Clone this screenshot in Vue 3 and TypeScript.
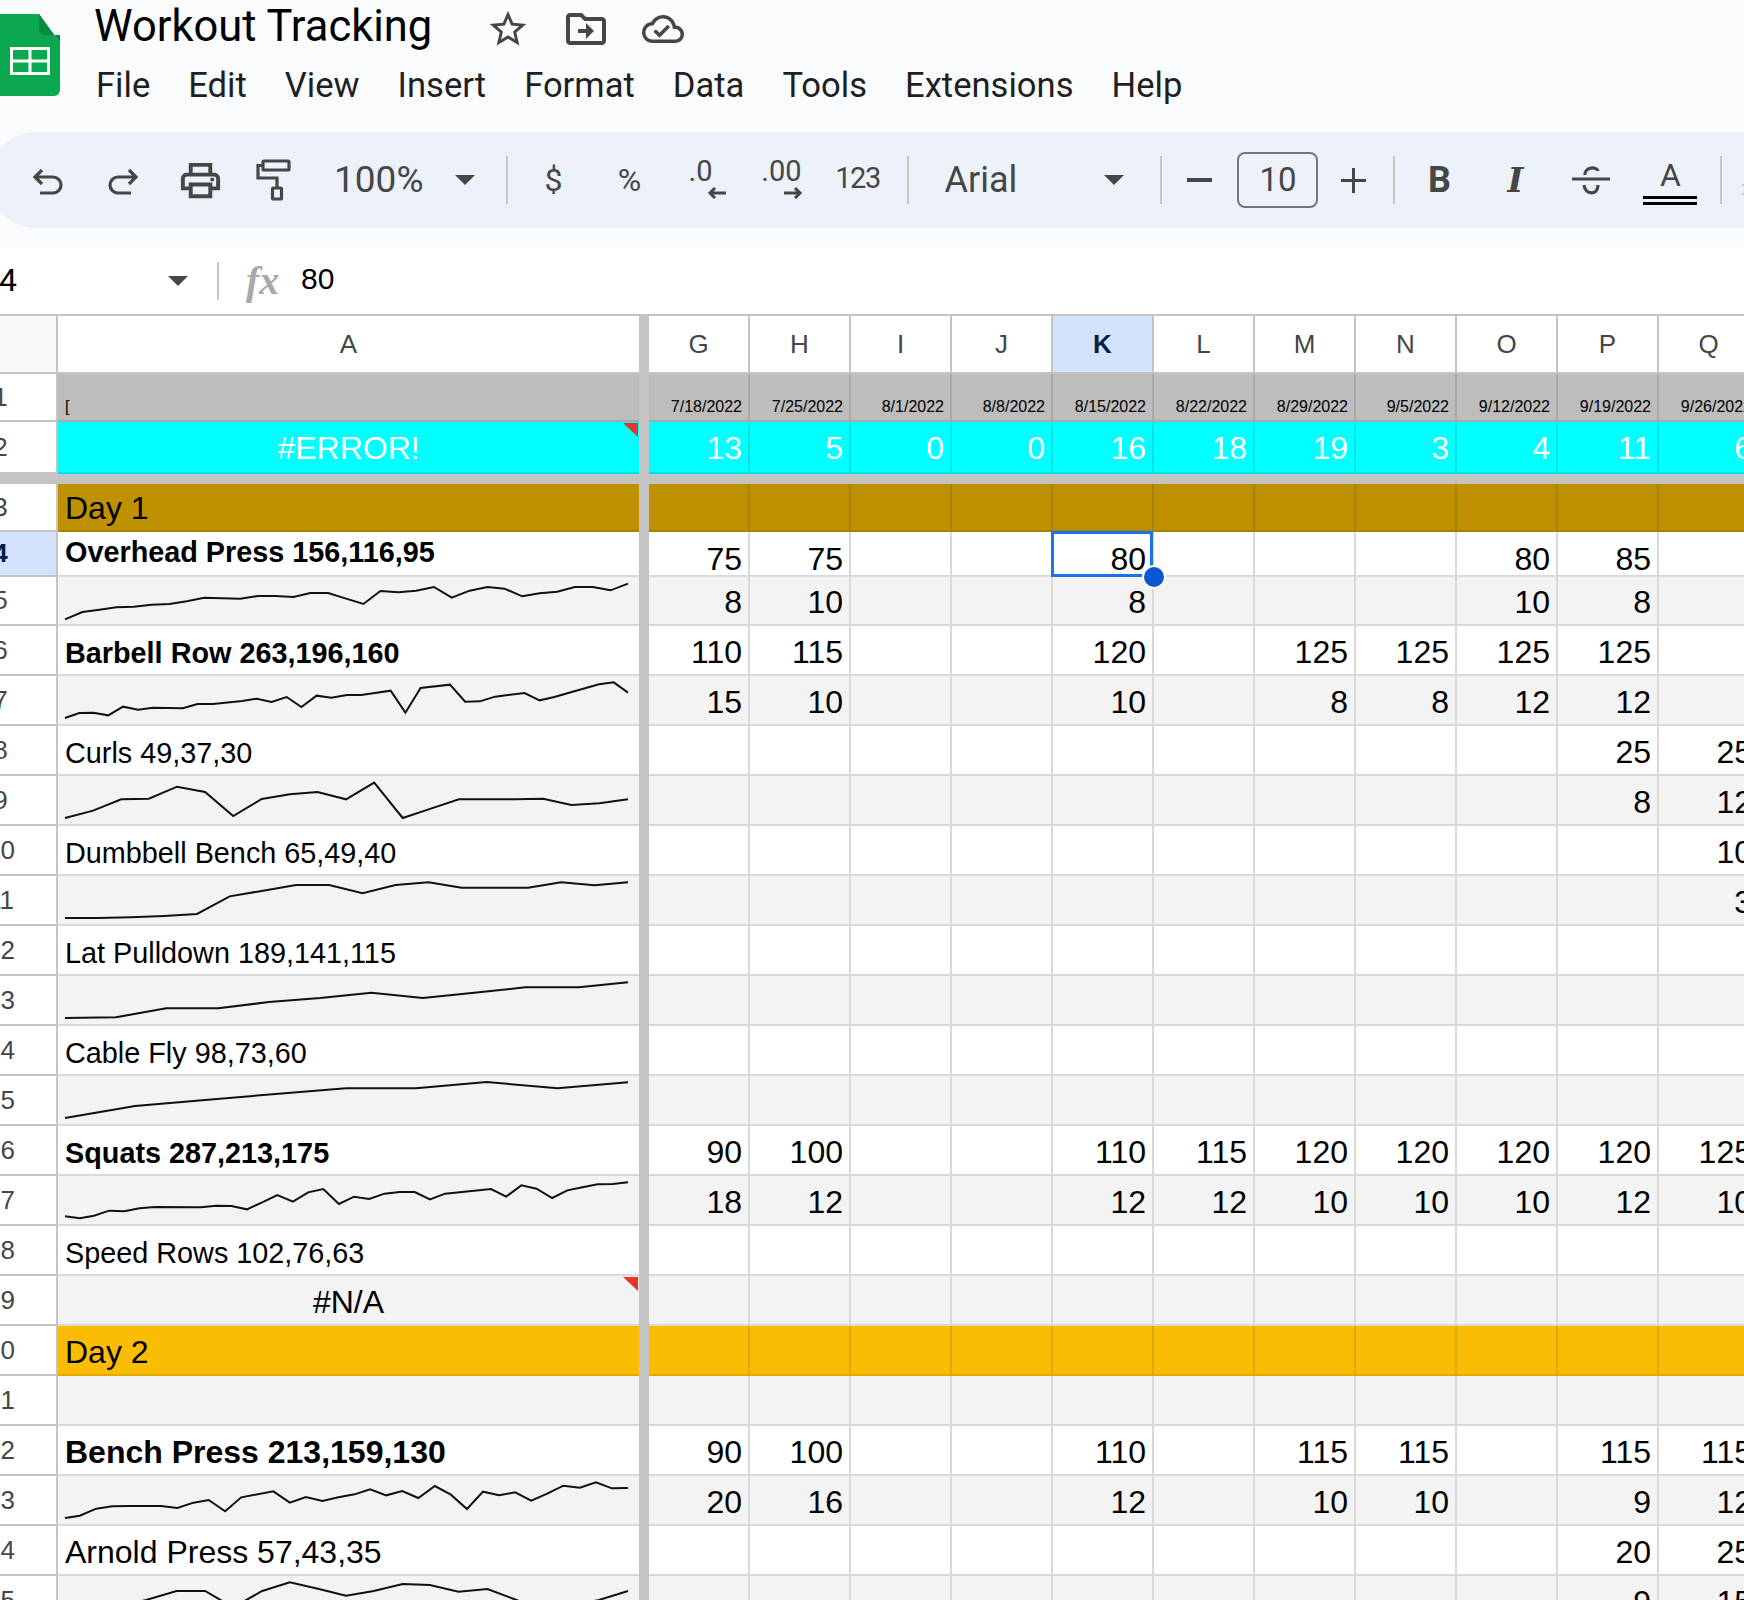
<template>
  <div class="page">
    <header class="chrome">
      <div class="topbar">
        <svg class="logo" viewBox="0 0 60 82" width="60" height="82">
          <path d="M-6 0H39L60 29V76a6 6 0 0 1-6 6H-6Z" fill="#0ca84f" />
          <path d="M39 0L60 29V21H45a6 6 0 0 1-6-6Z" fill="#0a8a3f" />
          <path d="M10 33H50V61H10ZM13 36V45.5H28.5V36ZM31.500 36V45.5H47V36ZM13 48.500V58H28.500V48.500ZM31.500 48.500V58H47V48.500Z" fill="#fff" fill-rule="evenodd" />
        </svg>
        <div class="titles">
          <div class="title-row">
            <span class="doc-title">Workout Tracking</span>
            <svg class="star" viewBox="0 0 24 24" width="44" height="44"><path d="M22 9.240l-7.190-.620L12 2 9.190 8.630 2 9.240l5.460 4.730L5.820 21 12 17.270 18.180 21l-1.630-7.030L22 9.240zM12 15.400l-3.760 2.270 1-4.280-3.320-2.880 4.380-.380L12 6.100l1.710 4.040 4.380.380-3.320 2.880 1 4.280L12 15.400z" /></svg>
            <svg class="move" viewBox="0 0 24 24" width="48" height="48"><path d="M20 6h-8l-2-2H4c-1.100 0-2 .9-2 2v12c0 1.100.9 2 2 2h16c1.100 0 2-.9 2-2V8c0-1.100-.9-2-2-2zm0 12H4V6h5.170l2 2H20v10zm-8-4H8v-2h4V9l4 4-4 4v-3z" /></svg>
            <svg class="cloud" viewBox="0 0 24 24" width="42" height="42"><path d="M19.350 10.040C18.670 6.590 15.640 4 12 4 9.110 4 6.600 5.640 5.350 8.040 2.340 8.360 0 10.910 0 14c0 3.310 2.690 6 6 6h13c2.760 0 5-2.240 5-5 0-2.640-2.050-4.780-4.650-4.960zM19 18H6c-2.210 0-4-1.790-4-4 0-2.050 1.530-3.760 3.560-3.970l1.070-.110.5-.950C8.080 7.140 9.940 6 12 6c2.620 0 4.880 1.860 5.390 4.430l.3 1.500 1.530.110c1.560.1 2.780 1.410 2.780 2.960 0 1.650-1.350 3-3 3zm-9-3.820l-2.090-2.090L6.500 13.500 10 17l6.010-6.010-1.410-1.410z" /></svg>
          </div>
          <nav class="menu">
            <span v-for="m in menus" :key="m">{{ m }}</span>
          </nav>
        </div>
      </div>

      <div class="toolbar">
        <div class="group g-first">
          <div class="tool">
            <svg viewBox="0 0 40 40" width="40" height="40" class="line"><path d="M14 10L7 17L14 24M7 17H25a8 8 0 0 1 0 16H12" /></svg>
          </div>
          <div class="tool">
            <svg viewBox="0 0 40 40" width="40" height="40" class="line"><path d="M26 10L33 17L26 24M33 17H15a8 8 0 0 0 0 16H28" /></svg>
          </div>
          <div class="tool t-print">
            <svg viewBox="0 0 24 24" width="47" height="47" class="solid"><path d="M19 8h-1V3H6v5H5c-1.660 0-3 1.340-3 3v6h4v4h12v-4h4v-6c0-1.660-1.340-3-3-3zM8 5h8v3H8V5zm8 12v2H8v-4h8v2zm2-2v-2H6v2H4v-4c0-.55.45-1 1-1h14c.55 0 1 .45 1 1v4h-2z" /><circle cx="18" cy="11.500" r="1" /></svg>
          </div>
          <div class="tool t-paint">
            <svg viewBox="0 0 40 42" width="40" height="42" class="line"><rect x="11" y="2" width="26" height="9" rx="1" /><path d="M11 6.500H6V19H25V29" /><rect x="20.500" y="29" width="9" height="11" rx="1" /></svg>
          </div>
        </div>
        <span class="tb-text zoom">100%</span>
        <span class="caret c-zoom"></span>
        <span class="sep s1"></span>

        <div class="group g-num">
          <div class="tool glyph">$</div>
          <div class="tool glyph">%</div>
          <div class="tool dec">
            <span class="dec-text dec-one">.0</span>
            <svg viewBox="0 0 20 12" width="20" height="12" class="arrow"><path d="M19 6H3M8 1L3 6L8 11" /></svg>
          </div>
          <div class="tool dec">
            <span class="dec-text">.00</span>
            <svg viewBox="0 0 20 12" width="20" height="12" class="arrow"><path d="M1 6H17M12 1L17 6L12 11" /></svg>
          </div>
          <div class="tool glyph small">123</div>
        </div>
        <span class="sep s2"></span>
        <span class="tb-text font">Arial</span>
        <span class="caret c-font"></span>
        <span class="sep s3"></span>
        <span class="minus"></span>
        <span class="size">10</span>
        <span class="plus"></span>
        <span class="sep s4"></span>

        <div class="group g-format">
          <div class="tool bold">B</div>
          <div class="tool italic">I</div>
          <div class="tool">
            <svg viewBox="0 0 40 40" width="40" height="40" class="line"><path d="M1 19H39" /><path d="M14 15C13 7 26 6 27 11" /><path d="M13 25C14 35 27 36 27 25" /></svg>
          </div>
          <div class="tool color">
            <span class="color-a">A</span>
            <span class="color-bars"></span>
          </div>
        </div>
        <span class="sep s5"></span>
        <span class="more"></span>
      </div>
    </header>

    <div class="formula">
      <span class="name-box">K4</span>
      <span class="caret c-name"></span>
      <span class="sep s-name"></span>
      <span class="fx">fx</span>
      <span class="formula-value">80</span>
    </div>

    <div class="sheet">
      <div class="row row-head">
        <div class="rh corner"></div>
        <div class="a col-a">A</div>
        <div class="band"></div>
        <div v-for="c in cols" :key="c" class="cell col-name" :class="{ active: c === 'K' }">{{ c }}</div>
      </div>

      <template v-for="r in rows" :key="r.n">
        <div class="row" :class="r.cls">
          <div class="rh" :class="{ active: r.n === 4 }">{{ r.n }}</div>
          <div class="a" :class="r.labelCls">
            <svg v-if="r.spark" class="spark" viewBox="0 0 1262 144" width="563" height="48" preserveAspectRatio="none">
              <polyline :points="sparkPoints(r.spark)" />
            </svg>
            <span v-else>{{ r.label }}</span>
            <i v-if="r.err" class="err"></i>
          </div>
          <div class="band"></div>
          <div v-for="(v, i) in r.values" :key="i" class="cell">
            <span>{{ v }}</span>
            <template v-if="r.n === 4 && cols[i] === 'K'">
              <i class="select"></i>
              <i class="handle"></i>
            </template>
          </div>
        </div>
        <div v-if="r.n === 2" class="freeze"></div>
      </template>
    </div>
  </div>
</template>

<script setup lang="ts">
interface Spark {
  top: number
  pts: number[]
}

interface Row {
  n: number
  cls: string
  labelCls?: string
  label?: string
  values: string[]
  spark?: Spark
  err?: boolean
}

const menus = ['File', 'Edit', 'View', 'Insert', 'Format', 'Data', 'Tools', 'Extensions', 'Help']
const cols = ['G', 'H', 'I', 'J', 'K', 'L', 'M', 'N', 'O', 'P', 'Q']

// G..Q, blank cells as ''
const vals = (s: string) => s.split(',')
const blank = vals(',,,,,,,,,,')

function sparkPoints(s: Spark) {
  const out: string[] = []
  for (let i = 0; i < s.pts.length; i += 2) {
    out.push(`${s.pts[i] - 148},${s.pts[i + 1] - s.top}`)
  }
  return out.join(' ')
}

const rows: Row[] = [
  { n: 1, cls: 'r-date', labelCls: 'tiny', label: '[', values: vals('7/18/2022,7/25/2022,8/1/2022,8/8/2022,8/15/2022,8/22/2022,8/29/2022,9/5/2022,9/12/2022,9/19/2022,9/26/2022') },
  { n: 2, cls: 'r-total', labelCls: 'center', label: '#ERROR!', err: true, values: vals('13,5,0,0,16,18,19,3,4,11,6') },
  { n: 3, cls: 'r-day1', labelCls: 'big', label: 'Day 1', values: blank },
  { n: 4, cls: 'r-top', labelCls: 'small b', label: 'Overhead Press 156,116,95', values: vals('75,75,,,80,,,,80,85,') },
  { n: 5, cls: 'alt r49', values: vals('8,10,,,8,,,,10,8,'), spark: { top: 828, pts: [148, 955, 187, 933, 225, 926, 263, 919, 302, 917, 342, 911, 382, 909, 421, 901, 460, 890, 500, 892, 541, 893, 581, 885, 620, 885, 660, 888, 698, 876, 738, 876, 778, 893, 817, 909, 855, 870, 895, 874, 935, 869, 975, 858, 1015, 890, 1055, 869, 1095, 858, 1133, 863, 1173, 886, 1212, 877, 1251, 872, 1291, 858, 1331, 858, 1371, 868, 1410, 848] } },
  { n: 6, cls: '', labelCls: 'small b', label: 'Barbell Row 263,196,160', values: vals('110,115,,,120,,125,125,125,125,') },
  { n: 7, cls: 'alt', values: vals('15,10,,,10,,8,8,12,12,'), spark: { top: 1128, pts: [148, 1254, 180, 1239, 212, 1238, 245, 1246, 278, 1220, 312, 1229, 345, 1223, 412, 1225, 445, 1212, 480, 1212, 545, 1203, 578, 1196, 611, 1206, 645, 1191, 678, 1221, 712, 1187, 745, 1193, 780, 1185, 812, 1185, 878, 1172, 911, 1238, 945, 1164, 1011, 1154, 1045, 1205, 1078, 1204, 1112, 1190, 1178, 1179, 1212, 1201, 1245, 1191, 1278, 1178, 1345, 1153, 1378, 1147, 1410, 1178] } },
  { n: 8, cls: '', labelCls: 'small', label: 'Curls 49,37,30', values: vals(',,,,,,,,,25,25') },
  { n: 9, cls: 'alt', values: vals(',,,,,,,,,8,12'), spark: { top: 168, pts: [148, 294, 211, 272, 274, 238, 336, 236, 399, 200, 462, 216, 525, 288, 589, 237, 652, 223, 714, 216, 778, 238, 841, 188, 905, 294, 968, 266, 1031, 238, 1157, 238, 1220, 236, 1283, 255, 1346, 250, 1410, 238] } },
  { n: 10, cls: '', labelCls: 'small', label: 'Dumbbell Bench 65,49,40', values: vals(',,,,,,,,,,10') },
  { n: 11, cls: 'alt', values: vals(',,,,,,,,,,3'), spark: { top: 468, pts: [148, 594, 222, 594, 296, 592, 370, 588, 444, 582, 517, 529, 592, 512, 666, 495, 740, 495, 815, 520, 889, 495, 963, 487, 1037, 503, 1186, 503, 1260, 487, 1335, 496, 1410, 487] } },
  { n: 12, cls: '', labelCls: 'small', label: 'Lat Pulldown 189,141,115', values: blank },
  { n: 13, cls: 'alt', values: blank, spark: { top: 768, pts: [148, 894, 262, 892, 375, 865, 492, 865, 605, 846, 720, 834, 835, 818, 950, 834, 1065, 818, 1180, 802, 1300, 802, 1410, 787] } },
  { n: 14, cls: '', labelCls: 'small', label: 'Cable Fly 98,73,60', values: blank },
  { n: 15, cls: 'alt', values: blank, spark: { top: 1068, pts: [148, 1194, 305, 1158, 462, 1140, 620, 1122, 778, 1105, 935, 1105, 1093, 1086, 1252, 1105, 1410, 1087] } },
  { n: 16, cls: '', labelCls: 'small b', label: 'Squats 287,213,175', values: vals('90,100,,,110,115,120,120,120,120,125') },
  { n: 17, cls: 'alt', values: vals('18,12,,,12,12,10,10,10,12,10'), spark: { top: 78, pts: [148, 199, 181, 205, 213, 197, 247, 182, 281, 184, 315, 175, 350, 171, 452, 172, 487, 167, 521, 168, 556, 178, 590, 157, 624, 135, 659, 155, 693, 127, 727, 117, 762, 162, 796, 140, 830, 147, 864, 131, 898, 126, 932, 126, 966, 148, 1000, 131, 1103, 117, 1137, 140, 1171, 106, 1205, 116, 1240, 144, 1274, 121, 1308, 112, 1342, 103, 1376, 102, 1410, 97] } },
  { n: 18, cls: '', labelCls: 'small', label: 'Speed Rows 102,76,63', values: blank },
  { n: 19, cls: 'alt', labelCls: 'center dark', label: '#N/A', err: true, values: blank },
  { n: 20, cls: 'r-day2', labelCls: 'big', label: 'Day 2', values: blank },
  { n: 21, cls: 'alt', label: '', values: blank },
  { n: 22, cls: '', labelCls: 'big b', label: 'Bench Press 213,159,130', values: vals('90,100,,,110,,115,115,,115,115') },
  { n: 23, cls: 'alt', values: vals('20,16,,,12,,10,10,,9,12'), spark: { top: 978, pts: [148, 1104, 181, 1097, 218, 1076, 254, 1069, 291, 1068, 363, 1068, 400, 1074, 436, 1058, 470, 1050, 507, 1084, 543, 1042, 615, 1024, 652, 1058, 688, 1041, 725, 1053, 761, 1042, 797, 1033, 832, 1018, 868, 1036, 904, 1023, 940, 1044, 977, 1008, 1013, 1034, 1049, 1077, 1085, 1025, 1121, 1036, 1157, 1027, 1193, 1052, 1229, 1031, 1265, 1007, 1302, 1013, 1338, 997, 1374, 1015, 1410, 1014] } },
  { n: 24, cls: '', labelCls: 'big', label: 'Arnold Press 57,43,35', values: vals(',,,,,,,,,20,25') },
  { n: 25, cls: 'alt', values: vals(',,,,,,,,,9,15'), spark: { top: 1278, pts: [148, 1400, 265, 1370, 330, 1350, 398, 1323, 462, 1323, 525, 1372, 590, 1323, 652, 1297, 715, 1316, 778, 1337, 840, 1323, 905, 1302, 966, 1305, 1030, 1325, 1095, 1317, 1160, 1350, 1220, 1385, 1345, 1350, 1410, 1323] } },
]
</script>

<style>
html,
body {
  margin: 0;
  background: #fff;
}
</style>

<style scoped>
.page {
  width: 1744px;
  height: 1600px;
  overflow: hidden;
  position: relative;
  background: #fff;
  font-family: 'Liberation Sans', Arial, sans-serif;
  color: #000;
}

.chrome {
  background: #f9fbfd;
  height: 247px;
  font-family: Roboto, 'Liberation Sans', sans-serif;
}
.topbar {
  display: flex;
  height: 132px;
}
.logo {
  margin-top: 14px;
  flex-shrink: 0;
}
.titles {
  margin-left: 35px;
}
.title-row {
  display: flex;
  align-items: center;
  height: 54px;
}
.doc-title {
  font-size: 43.500px;
  line-height: 54px;
  width: 377px;
  margin-left: -1px;
  white-space: nowrap;
  color: #000;
}
.title-row svg {
  fill: #444746;
  flex-shrink: 0;
  margin-top: 4px;
}
.star {
  margin-left: 15px;
}
.move {
  margin-left: 32px;
}
.cloud {
  margin-left: 32px;
}
.menu {
  display: flex;
  gap: 38px;
  margin-top: 3px;
  font-size: 34.600px;
  line-height: 56px;
  color: #1f1f1f;
  margin-left: 1px;
}

.toolbar {
  display: flex;
  align-items: center;
  height: 96px;
  margin-left: -12px;
  padding-left: 40px;
  background: #edf2fa;
  border-radius: 48px 0 0 48px;
  color: #444746;
}
.group {
  display: flex;
  align-items: center;
  gap: 36px;
}
.g-first {
  gap: 35px;
}
.tool {
  width: 40px;
  height: 48px;
  display: flex;
  align-items: center;
  justify-content: center;
  flex-shrink: 0;
  white-space: nowrap;
}
.t-print {
  margin-left: 2px;
}
.t-paint {
  margin-left: -3px;
}
.tool svg {
  flex-shrink: 0;
}
.line {
  fill: none;
  stroke: #444746;
  stroke-width: 3.2;
}
.solid {
  fill: #444746;
}
.tb-text {
  font-size: 36px;
  line-height: 48px;
  white-space: nowrap;
}
.zoom {
  width: 91px;
  margin-left: 42px;
  font-size: 37px;
}
.font {
  width: 71px;
  margin-left: 35px;
}
.caret {
  width: 0;
  height: 0;
  border-left: 10px solid transparent;
  border-right: 10px solid transparent;
  border-top: 10px solid #444746;
  flex-shrink: 0;
}
.c-zoom {
  margin-left: 32px;
}
.c-font {
  margin-left: 89px;
}
.sep {
  width: 2px;
  height: 48px;
  background: #c7c7c7;
  flex-shrink: 0;
}
.s1 {
  margin-left: 31px;
}
.g-num {
  margin-left: 25px;
}
.s2 {
  margin-left: 30px;
}
.s3 {
  margin-left: 36px;
}
.s4 {
  margin-left: 20px;
}
.s5 {
  margin-left: 30px;
}
.glyph {
  font-size: 32px;
}
.glyph.small {
  font-size: 29px;
  letter-spacing: -1.500px;
}
.dec {
  flex-direction: column;
  align-items: flex-end;
  justify-content: flex-start;
  height: 48px;
}
.dec-text {
  font-size: 29px;
  line-height: 30px;
  align-self: center;
}
.dec-one {
  margin-right: 10px;
}
.arrow {
  fill: none;
  stroke: #444746;
  stroke-width: 3;
  margin-right: -2px;
  margin-top: 1px;
}
.minus {
  width: 25px;
  height: 4px;
  background: #444746;
  margin-left: 25px;
  margin-right: 25px;
  flex-shrink: 0;
}
.size {
  box-sizing: border-box;
  width: 81px;
  height: 56px;
  border: 2px solid #747775;
  border-radius: 8px;
  font-size: 33px;
  line-height: 52px;
  text-align: center;
  flex-shrink: 0;
}
.plus {
  position: relative;
  width: 25px;
  height: 25px;
  margin-left: 23px;
  margin-right: 7px;
  flex-shrink: 0;
  background: linear-gradient(#444746, #444746) center / 100% 3px no-repeat,
    linear-gradient(#444746, #444746) center / 3px 100% no-repeat;
}
.g-format {
  margin-left: 24px;
}
.bold {
  font-size: 36px;
  font-weight: 700;
}
.italic {
  font-family: 'DejaVu Serif', serif;
  font-size: 34px;
  font-weight: 700;
  font-style: italic;
}
.color {
  flex-direction: column;
  justify-content: flex-start;
  height: 48px;
  margin-left: 3px;
}
.color-a {
  font-size: 32px;
  line-height: 38px;
}
.color-bars {
  width: 54px;
  height: 9px;
  flex-shrink: 0;
  margin-top: 2px;
  border-top: 3px solid #000;
  border-bottom: 3px solid #000;
  box-sizing: border-box;
}
.more {
  width: 10px;
  height: 7px;
  margin-left: 20px;
  margin-top: 18px;
  border-top: 2px solid #c7c7c7;
  border-bottom: 2px solid #c7c7c7;
  flex-shrink: 0;
}

.formula {
  display: flex;
  align-items: center;
  height: 68px;
  background: #fff;
}
.name-box {
  margin-left: -21px;
  margin-top: -3px;
  width: 189px;
  flex-shrink: 0;
  font-family: Roboto, 'Liberation Sans', sans-serif;
  font-size: 32px;
  line-height: 40px;
}
.c-name {
  margin-left: 0;
}
.s-name {
  height: 38px;
  margin-left: 29px;
}
.fx {
  width: 33px;
  margin-left: 27px;
  font-family: 'Liberation Serif', serif;
  font-style: italic;
  font-weight: 700;
  font-size: 40px;
  line-height: 40px;
  color: #a8a8a8;
}
.formula-value {
  margin-left: 22px;
  margin-top: -4px;
  font-size: 30px;
  line-height: 40px;
}

.sheet {
  margin-left: -55px;
  border-top: 2px solid #c4c4c4;
  margin-top: -1px;
}
.row {
  display: flex;
  height: 50px;
  width: 1830px;
  --line: #d9d9d9;
}
.rh {
  box-sizing: border-box;
  width: 113px;
  flex-shrink: 0;
  display: flex;
  align-items: center;
  justify-content: center;
  background: #fff;
  border-right: 2px solid #c4c4c4;
  border-bottom: 2px solid #c4c4c4;
  font-size: 26px;
  color: #444746;
}
.rh.active {
  background: #d3e3fd;
  color: #041e49;
  font-weight: 700;
}
.rh.corner {
  background: #f8f9fa;
}
.a {
  position: relative;
  box-sizing: border-box;
  width: 581px;
  flex-shrink: 0;
  display: flex;
  align-items: flex-end;
  padding-left: 7px;
  border-bottom: 2px solid var(--line);
  white-space: nowrap;
}
.band {
  width: 10px;
  flex-shrink: 0;
  background: #c4c4c4;
}
.cell {
  position: relative;
  box-sizing: border-box;
  width: 101px;
  flex-shrink: 0;
  display: flex;
  align-items: flex-end;
  justify-content: flex-end;
  padding: 0 6px 6px 0;
  border-right: 2px solid var(--line);
  border-bottom: 2px solid var(--line);
  font-size: 32px;
  line-height: 32px;
  white-space: nowrap;
}

.row-head {
  height: 58px;
  --line: #c4c4c4;
}
.col-a,
.col-name {
  justify-content: center;
  align-items: center;
  padding: 0;
  font-size: 26px;
  color: #444746;
  background: #fff;
}
.col-name.active {
  background: #d3e3fd;
  color: #041e49;
  font-weight: 700;
}

.small {
  font-size: 28.800px;
  line-height: 32px;
  padding-bottom: 5px;
}
.big {
  font-size: 32px;
  line-height: 32px;
  padding-bottom: 6px;
}
.b {
  font-weight: 700;
}
.center {
  justify-content: center;
  padding-left: 0;
  font-size: 32px;
  line-height: 32px;
  padding-bottom: 6px;
}
.center.dark {
  color: #000;
}
.tiny {
  font-size: 16px;
  line-height: 20px;
  padding-bottom: 3px;
}

.alt .a,
.alt .cell {
  background: #f3f3f3;
}
.r49 {
  height: 49px;
}
.r-top {
  height: 45px;
}
.r-top .cell {
  padding-bottom: 0;
}
.r-top .small {
  padding-bottom: 7px;
}
.r-date {
  height: 48px;
  --line: #a8a8a8;
}
.r-date .a,
.r-date .cell {
  background: #bdbdbd;
}
.r-date .cell {
  font-size: 16px;
  line-height: 20px;
  padding-bottom: 3px;
}
.r-total {
  height: 52px;
  --line: #00e2e2;
}
.r-total .a,
.r-total .cell {
  background: #00ffff;
  color: #fff;
}
.r-total .cell {
  padding-bottom: 8px;
}
.r-total .a {
  padding-bottom: 8px;
}
.r-day1 {
  height: 48px;
  --line: #a98000;
}
.r-day1 .a,
.r-day1 .cell {
  background: #bf9000;
}
.r-day2 {
  --line: #e0a800;
}
.r-day2 .a,
.r-day2 .cell {
  background: #fbbc04;
}
.freeze {
  height: 10px;
  width: 1830px;
  background: #c4c4c4;
}

.spark {
  display: block;
  overflow: visible;
  flex-shrink: 0;
  align-self: flex-start;
  fill: none;
  stroke: #111;
  stroke-width: 2;
}
.spark polyline {
  vector-effect: non-scaling-stroke;
}
.err {
  position: absolute;
  top: 1px;
  right: 1px;
  width: 0;
  height: 0;
  border-left: 15px solid transparent;
  border-top: 14px solid #e53528;
}

.select {
  position: absolute;
  left: -2px;
  top: -1px;
  width: 102px;
  height: 46px;
  box-sizing: border-box;
  border: 3px solid #1a73e8;
}
.handle {
  position: absolute;
  right: -12px;
  bottom: -12px;
  width: 20px;
  height: 20px;
  box-sizing: border-box;
  border-radius: 50%;
  background: #0b57d0;
  box-shadow: 0 0 0 2px #fff;
  z-index: 2;
}
</style>
